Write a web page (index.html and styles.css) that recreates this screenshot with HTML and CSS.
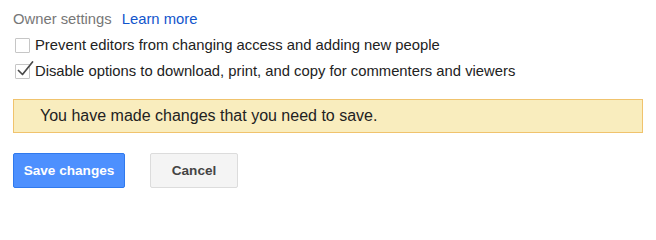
FILE: index.html
```html
<!DOCTYPE html>
<html>
<head>
<meta charset="utf-8">
<link rel="stylesheet" href="styles.css">
</head>
<body>
<div class="panel">
  <div class="header">
    <span class="title">Owner settings</span>
    <a class="learn" href="#">Learn more</a>
  </div>
  <div class="row">
    <span class="box"></span>
    <span class="label">Prevent editors from changing access and adding new people</span>
  </div>
  <div class="row">
    <span class="box checked">
      <svg class="tick" width="18" height="18" viewBox="0 0 18 18"><path d="M2.5 9.5 L6.5 13.5 L16.5 1" fill="none" stroke="#4a4a4a" stroke-width="1.7" stroke-linecap="round" stroke-linejoin="round"/></svg>
    </span>
    <span class="label">Disable options to download, print, and copy for commenters and viewers</span>
  </div>
  <div class="banner">You have made changes that you need to save.</div>
  <div class="actions">
    <button class="btn primary">Save changes</button>
    <button class="btn secondary">Cancel</button>
  </div>
</div>
</body>
</html>
```
FILE: styles.css
```css
html, body {
  margin: 0;
  padding: 0;
  background: #fff;
}
body {
  font-family: "Liberation Sans", Arial, sans-serif;
  color: #222;
}
.panel {
  padding: 9px 13px 0 13px;
  display: flex;
  flex-direction: column;
}
.header {
  display: flex;
  align-items: baseline;
  gap: 10px;
  font-size: 14.8px;
  line-height: 20px;
}
.title {
  color: #777;
}
.learn {
  color: #15c;
  text-decoration: none;
}
.row {
  display: flex;
  align-items: center;
  height: 26px;
  font-size: 14.8px;
  padding-left: 2px;
}
.header + .row {
  margin-top: 3px;
}
.box {
  position: relative;
  box-sizing: border-box;
  width: 15px;
  height: 15px;
  border: 1px solid #c6c6c6;
  border-radius: 1px;
  background: #fff;
  margin-right: 5px;
  flex: none;
}
.tick {
  position: absolute;
  left: 0px;
  top: -4px;
}
.label {
  color: #222;
}
.banner {
  margin-top: 15px;
  box-sizing: border-box;
  height: 34px;
  border: 1px solid #f0c36d;
  background: #f9edbe;
  font-size: 16px;
  line-height: 32px;
  padding-left: 26px;
  color: #222;
}
.actions {
  margin-top: 20px;
  display: flex;
  gap: 25px;
}
.btn {
  box-sizing: border-box;
  height: 35px;
  font-family: "Liberation Sans", Arial, sans-serif;
  font-weight: bold;
  font-size: 13.6px;
  border-radius: 2px;
  padding: 0;
}
.primary {
  width: 112px;
  background: #4d90fe;
  border: 1px solid #3079ed;
  color: #fff;
}
.secondary {
  width: 88px;
  background: #f4f4f4;
  border: 1px solid #dcdcdc;
  color: #444;
}
```
